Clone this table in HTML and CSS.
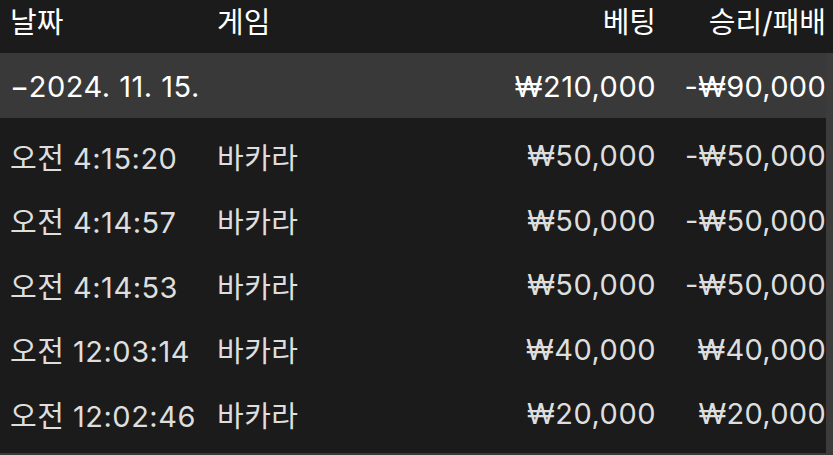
FILE: index.html
```html
<!DOCTYPE html>
<html lang="ko">

<head>
    <meta charset="UTF-8">
    <meta name="viewport" content="width=device-width, initial-scale=1.0">
    <title>베팅 내역</title>
    <link rel="stylesheet" href="styles.css">
</head>

<body>
    <div class="history">
        <table class="bets">
            <thead>
                <tr>
                    <th class="col-date">날짜</th>
                    <th class="col-game">게임</th>
                    <th class="col-bet">베팅</th>
                    <th class="col-result">승리/패배</th>
                </tr>
            </thead>
            <tbody>
                <tr class="group">
                    <td colspan="2">−2024. 11. 15.</td>
                    <td class="num">₩210,000</td>
                    <td class="num">-₩90,000</td>
                </tr>
                <tr>
                    <td>오전 4:15:20</td>
                    <td>바카라</td>
                    <td class="num">₩50,000</td>
                    <td class="num">-₩50,000</td>
                </tr>
                <tr>
                    <td>오전 4:14:57</td>
                    <td>바카라</td>
                    <td class="num">₩50,000</td>
                    <td class="num">-₩50,000</td>
                </tr>
                <tr>
                    <td>오전 4:14:53</td>
                    <td>바카라</td>
                    <td class="num">₩50,000</td>
                    <td class="num">-₩50,000</td>
                </tr>
                <tr>
                    <td>오전 12:03:14</td>
                    <td>바카라</td>
                    <td class="num">₩40,000</td>
                    <td class="num">₩40,000</td>
                </tr>
                <tr>
                    <td>오전 12:02:46</td>
                    <td>바카라</td>
                    <td class="num">₩20,000</td>
                    <td class="num">₩20,000</td>
                </tr>
            </tbody>
        </table>
        <div class="scrollbar"></div>
    </div>
</body>

</html>
```

FILE: styles.css
```css
body {
    margin: 0;
    padding: 0;
    background: #1b1b1b;
    font-family: Inter, "Noto Sans CJK KR", sans-serif;
    color: #dedede;
    overflow: hidden;
}

.history {
    position: relative;
    width: 833px;
    height: 455px;
    border-bottom: 2px solid #3a3a3a;
    box-sizing: border-box;
}

.bets {
    width: 826px;
    border-collapse: collapse;
    font-size: 29px;
    letter-spacing: 0.5px;
}

.bets th {
    height: 53px;
    font-weight: 400;
    color: #ffffff;
    text-align: left;
    padding: 0;
    vertical-align: top;
    line-height: 46px;
    letter-spacing: 0;
}

.bets td {
    height: 64.5px;
    padding: 0;
    padding-top: 11px;
    box-sizing: border-box;
    white-space: nowrap;
}

.col-date {
    width: 207px;
    padding-left: 10px !important;
}

.col-game {
    width: 250px;
}

.bets th.col-bet,
.bets th.col-result {
    text-align: right;
}

.col-result {
    width: 170px;
}

.bets td:first-child {
    padding-left: 10px;
}

.num {
    text-align: right;
}

.bets td.num:last-child {
    letter-spacing: 0.3px;
}

.group td {
    background: #393939;
    color: #ffffff;
    height: 65px;
    padding-top: 1px;
}

.scrollbar {
    position: absolute;
    top: 53px;
    right: 0;
    width: 7px;
    bottom: 0;
    background: #3c3c3c;
}
```
